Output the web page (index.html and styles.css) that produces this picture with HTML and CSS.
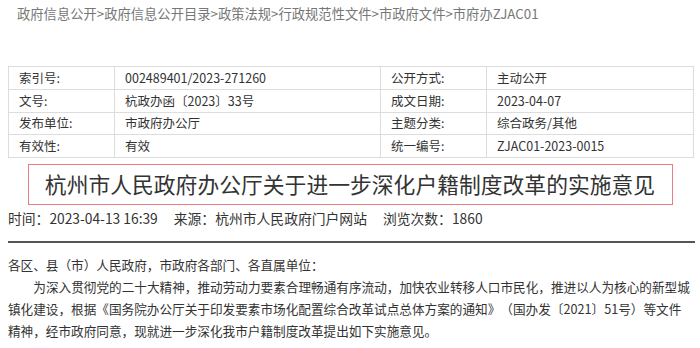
FILE: index.html
```html
<!DOCTYPE html>
<html lang="zh-CN">
<head>
<meta charset="utf-8">
<title>杭州市人民政府办公厅关于进一步深化户籍制度改革的实施意见</title>
<link rel="stylesheet" href="styles.css">
</head>
<body>
<div class="page">
  <div class="crumbs">政府信息公开&gt;政府信息公开目录&gt;政策法规&gt;行政规范性文件&gt;市政府文件&gt;市府办ZJAC01</div>
  <table class="info">
    <colgroup>
      <col class="c-label"><col class="c-val1"><col class="c-label"><col class="c-val2">
    </colgroup>
    <tr><td>索引号:</td><td>002489401/2023-271260</td><td>公开方式:</td><td>主动公开</td></tr>
    <tr><td>文号:</td><td>杭政办函〔2023〕33号</td><td>成文日期:</td><td>2023-04-07</td></tr>
    <tr><td>发布单位:</td><td>市政府办公厅</td><td>主题分类:</td><td>综合政务/其他</td></tr>
    <tr><td>有效性:</td><td>有效</td><td>统一编号:</td><td>ZJAC01-2023-0015</td></tr>
  </table>
  <div class="title-wrap">
    <h1 class="title">杭州市人民政府办公厅关于进一步深化户籍制度改革的实施意见</h1>
  </div>
  <div class="meta">
    <span>时间：2023-04-13 16:39</span>
    <span>来源：杭州市人民政府门户网站</span>
    <span>浏览次数：1860</span>
  </div>
  <div class="rule"></div>
  <div class="body">
    <p class="salute">各区、县（市）人民政府，市政府各部门、各直属单位：</p>
    <p class="para">为深入贯彻党的二十大精神，推动劳动力要素合理畅通有序流动，加快农业转移人口市民化，推进以人为核心的新型城镇化建设，根据《国务院办公厅关于印发要素市场化配置综合改革试点总体方案的通知》（国办发〔2021〕51号）等文件精神，经市政府同意，现就进一步深化我市户籍制度改革提出如下实施意见。</p>
  </div>
</div>
</body>
</html>
```

FILE: styles.css
```css
* { box-sizing: border-box; }
html, body { margin: 0; padding: 0; background: #fff; }
body {
  font-family: "Noto Sans CJK SC", "Microsoft YaHei", "Noto Sans", sans-serif;
  color: #333;
  text-spacing-trim: space-all;
}
.page {
  padding: 0 8px;
}
.crumbs {
  padding: 5px 0 0 9px;
  height: 66px;
  font-size: 13.3px;
  line-height: 18px;
  color: #777;
}
.info {
  width: calc(100% + 1px);
  border-collapse: collapse;
  table-layout: fixed;
  font-size: 12.5px;
  color: #333;
}
.c-label { width: 106px; }
.c-val1 { width: 266px; }
.c-val2 { width: 207px; }
.info td {
  border: 1px solid #ddd;
  height: 22.75px;
  padding: 0 0 0 10px;
  line-height: 20px;
  white-space: nowrap;
}
.title-wrap {
  display: flex;
  justify-content: center;
  padding: 6px 0 0;
}
.title {
  margin: 0;
  width: 645px;
  height: 41px;
  border: 1.5px solid #ea7c82;
  font-size: 21.8px;
  font-weight: normal;
  line-height: 38px;
  text-align: center;
  color: #333;
}
.meta {
  display: flex;
  gap: 16px;
  margin-top: 4px;
  font-size: 13.8px;
  line-height: 18px;
  color: #333;
}
.rule {
  margin: 14px -3px 0 0;
  height: 2px;
  background: #555;
}
.body {
  padding-top: 11px;
  font-size: 12.64px;
  line-height: 22px;
  color: #333;
}
.body p { margin: 0; }
.para {
  text-indent: 2em;
}
```
